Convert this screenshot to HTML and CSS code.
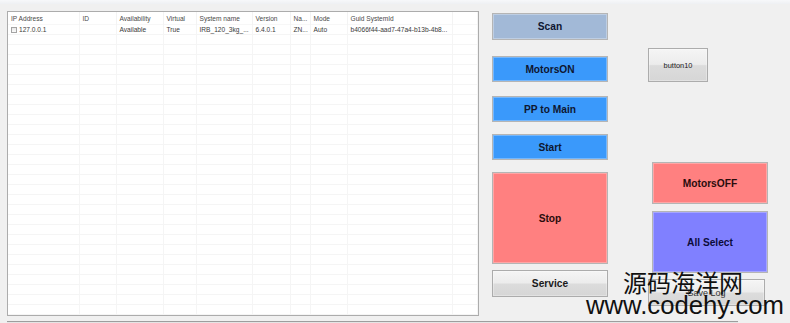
FILE: index.html
```html
<!DOCTYPE html>
<html lang="en">
<head>
	<meta charset="UTF-8" />
	<title>Robot Controller</title>
	<link rel="stylesheet" href="styles.css">
</head>
<body>
	<div class="window">
		<div class="topStrip"></div>
		<div class="main">
			<div class="robotList">
				<table id="robots">
					<colgroup>
						<col style="width:71px" /><col style="width:37px" /><col style="width:47px" />
						<col style="width:33px" /><col style="width:56px" /><col style="width:38px" />
						<col style="width:20px" /><col style="width:37px" /><col style="width:105px" />
						<col />
					</colgroup>
					<thead>
						<tr>
							<th>IP Address</th><th>ID</th><th>Availability</th><th>Virtual</th>
							<th>System name</th><th>Version</th><th>Na...</th><th>Mode</th>
							<th>Guid SystemId</th><th></th>
						</tr>
					</thead>
					<tbody>
						<tr>
							<td><span class="check"></span>127.0.0.1</td><td></td><td>Available</td><td>True</td>
							<td>IRB_120_3kg_...</td><td>6.4.0.1</td><td>ZN...</td><td>Auto</td>
							<td>b4066f44-aad7-47a4-b13b-4b8...</td><td></td>
						</tr>
					</tbody>
				</table>
			</div>
			<div class="controls">
				<div class="colLeft">
					<button class="btn scan">Scan</button>
					<button class="btn blue motorsOn">MotorsON</button>
					<button class="btn blue ppMain">PP to Main</button>
					<button class="btn blue start">Start</button>
					<button class="btn red stop">Stop</button>
					<button class="btn plain service">Service</button>
				</div>
				<div class="colRight">
					<button class="btn plain small button10">button10</button>
					<button class="btn red motorsOff">MotorsOFF</button>
					<button class="btn violet allSelect">All Select</button>
					<button class="btn plain small saveLog">Save Log</button>
				</div>
			</div>
		</div>
		<div class="statusBar"></div>
		<div class="watermark">
			<div class="wmName">源码海洋网</div>
			<div class="wmUrl">www.codehy.com</div>
		</div>
	</div>
	<script>
		// 空行，补满列表
		var body=document.getElementById("robots").tBodies[0];
		for (var i = 0; i < 28; i++) {
			var tr=document.createElement("tr");
			for (var j = 0; j < 10; j++) {
				tr.appendChild(document.createElement("td"));
			}
			body.appendChild(tr);
		}
	</script>
</body>
</html>
```

FILE: styles.css
```css
html,body {
	margin: 0;
	padding: 0;
}
body {
	background-color: #f0f0f0;
	font-family: "Liberation Sans", Arial, sans-serif;
	width: 790px;
	height: 323px;
	overflow: hidden;
}
.window {
	position: relative;
	height: 323px;
}
.topStrip {
	height: 4px;
	background: linear-gradient(#f7f8fa, #eef0f3);
}
.main {
	display: flex;
	align-items: flex-start;
	padding: 7px 0 0 7px;
}
.robotList {
	width: 470px;
	height: 303px;
	border: 1px solid #acacac;
	background-color: #fff;
	overflow: hidden;
}
#robots {
	table-layout: fixed;
	border-collapse: collapse;
	width: 470px;
	font-size: 6.6px;
	color: #3a3a3a;
}
#robots th {
	height: 12px;
	padding: 0 0 0 3px;
	font-weight: normal;
	text-align: left;
	color: #4a4a4a;
	border-right: 1px solid #f3f3f3;
	white-space: nowrap;
	overflow: hidden;
}
#robots td {
	height: 9px;
	padding: 0 0 0 3px;
	border-right: 1px solid #f5f5f5;
	border-bottom: 1px solid #f5f5f5;
	white-space: nowrap;
	overflow: hidden;
	line-height: 9px;
}
#robots tbody tr:first-child td {
	border-top: 1px solid #f7f7f7;
}
.check {
	display: inline-block;
	width: 4px;
	height: 4px;
	border: 1px solid #a4a4a4;
	background: linear-gradient(#e8e8e8, #fafafa);
	margin-right: 2px;
	vertical-align: -0.5px;
}
.controls {
	display: flex;
	margin-left: 13px;
}
.colLeft,.colRight {
	display: flex;
	flex-direction: column;
	align-items: flex-start;
}
.colRight {
	margin-left: 40px;
}
.btn {
	box-sizing: border-box;
	margin: 0;
	padding: 0;
	border: 1px solid #b5b5b5;
	box-shadow: inset 0 0 0 1px rgba(255,255,255,0.3);
	font-family: "Liberation Sans", Arial, sans-serif;
	font-weight: bold;
	font-size: 10.2px;
	color: #0e1630;
	width: 116px;
	height: 26px;
}
.scan {
	margin-top: 2px;
	height: 27px;
	background-color: #a2b9d7;
}
.blue {
	background-color: #3a99fb;
}
.red {
	background-color: #ff8080;
	color: #2a0c0c;
}
.violet {
	background-color: #8080ff;
	color: #0c0c3a;
}
.plain {
	background: linear-gradient(#f5f5f5 0%, #ececec 48%, #dcdcdc 52%, #d6d6d6 100%);
	border-color: #acacac;
	color: #1a1a1a;
}
.small {
	font-weight: normal;
	font-size: 7.4px;
}
.motorsOn {
	margin-top: 16px;
}
.ppMain {
	margin-top: 14px;
}
.start {
	margin-top: 12px;
}
.stop {
	margin-top: 12px;
	height: 92px;
}
.service {
	margin-top: 6px;
	height: 27px;
}
.button10 {
	margin-top: 37px;
	width: 60px;
	height: 34px;
}
.motorsOff {
	margin-top: 80px;
	margin-left: 4px;
	height: 42px;
}
.allSelect {
	margin-top: 7px;
	margin-left: 4px;
	height: 62px;
}
.saveLog {
	margin-top: 6px;
	width: 117px;
	height: 27px;
	color: #333;
	font-size: 9px;
}
.statusBar {
	margin: 5px 0 0 7px;
	width: 731px;
	height: 1px;
	border-top: 1px solid #9d9d9d;
	background-color: #e4e4e4;
}
.watermark {
	position: absolute;
	left: 586px;
	top: 270px;
	color: #111;
	pointer-events: none;
}
.wmName {
	margin-left: 37px;
	font-family: "Noto Sans CJK SC", sans-serif;
	font-size: 24px;
	line-height: 23px;
}
.wmUrl {
	font-family: "Liberation Sans", Arial, sans-serif;
	font-size: 25.7px;
	line-height: 24px;
}
```
